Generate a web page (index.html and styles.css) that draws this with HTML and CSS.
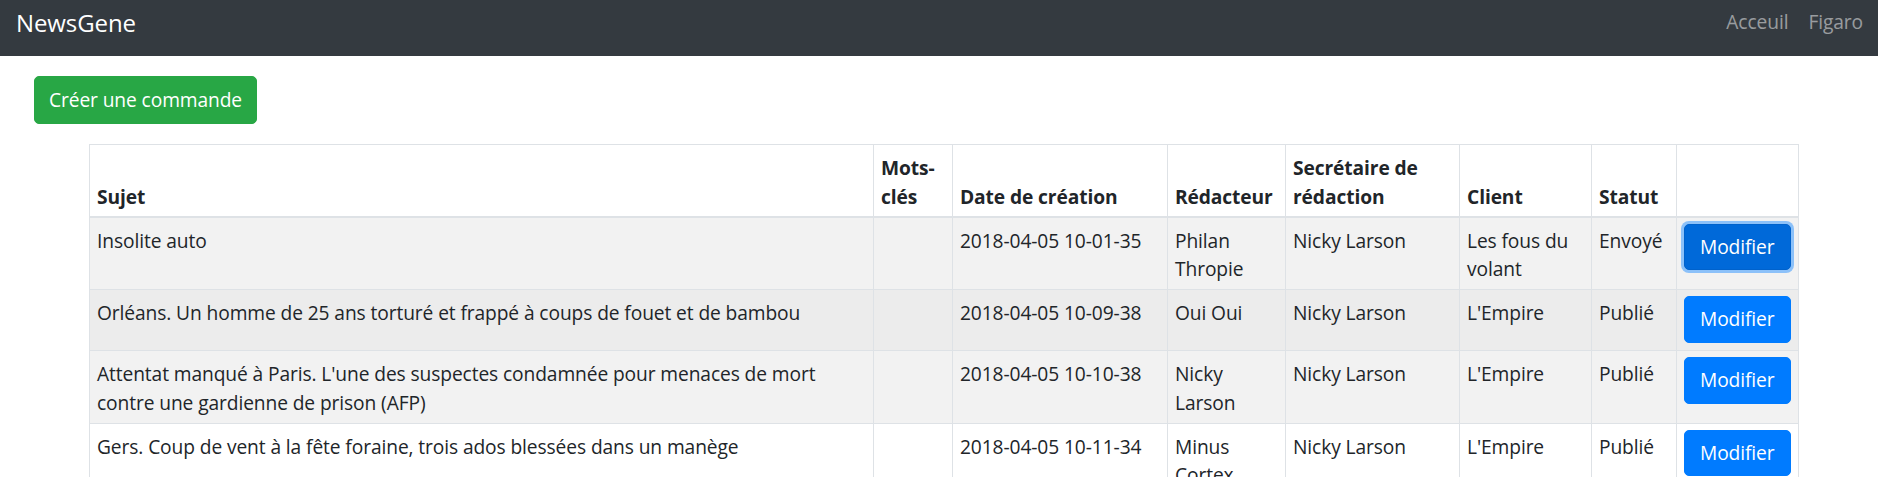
FILE: index.html
```html
<!DOCTYPE html>
<html lang="fr">
<head>
<meta charset="utf-8">
<title>NewsGene</title>
<link rel="stylesheet" href="styles.css">
</head>
<body>
<nav class="navbar">
  <a class="brand" href="#">NewsGene</a>
  <div class="nav-links">
    <a class="nav-link" href="#">Acceuil</a>
    <a class="nav-link" href="#">Figaro</a>
  </div>
</nav>
<main class="content">
  <div class="actions">
    <a class="btn btn-success" href="#">Créer une commande</a>
  </div>
  <table class="orders">
    <colgroup>
      <col class="c-sujet">
      <col class="c-mots">
      <col class="c-date">
      <col class="c-red">
      <col class="c-sec">
      <col class="c-client">
      <col class="c-statut">
      <col class="c-action">
    </colgroup>
    <thead>
      <tr>
        <th>Sujet</th>
        <th>Mots-clés</th>
        <th>Date de création</th>
        <th>Rédacteur</th>
        <th>Secrétaire de rédaction</th>
        <th>Client</th>
        <th>Statut</th>
        <th></th>
      </tr>
    </thead>
    <tbody>
      <tr class="striped">
        <td>Insolite auto</td>
        <td></td>
        <td>2018-04-05 10-01-35</td>
        <td>Philan Thropie</td>
        <td>Nicky Larson</td>
        <td>Les fous du volant</td>
        <td>Envoyé</td>
        <td class="cell-action"><a class="btn btn-primary is-focus" href="#">Modifier</a></td>
      </tr>
      <tr class="hovered">
        <td>Orléans. Un homme de 25 ans torturé et frappé à coups de fouet et de bambou</td>
        <td></td>
        <td>2018-04-05 10-09-38</td>
        <td>Oui Oui</td>
        <td>Nicky Larson</td>
        <td>L'Empire</td>
        <td>Publié</td>
        <td class="cell-action"><a class="btn btn-primary" href="#">Modifier</a></td>
      </tr>
      <tr class="striped">
        <td>Attentat manqué à Paris. L'une des suspectes condamnée pour menaces de mort contre une gardienne de prison (AFP)</td>
        <td></td>
        <td>2018-04-05 10-10-38</td>
        <td>Nicky Larson</td>
        <td>Nicky Larson</td>
        <td>L'Empire</td>
        <td>Publié</td>
        <td class="cell-action"><a class="btn btn-primary" href="#">Modifier</a></td>
      </tr>
      <tr>
        <td>Gers. Coup de vent à la fête foraine, trois ados blessées dans un manège</td>
        <td></td>
        <td>2018-04-05 10-11-34</td>
        <td>Minus Cortex</td>
        <td>Nicky Larson</td>
        <td>L'Empire</td>
        <td>Publié</td>
        <td class="cell-action"><a class="btn btn-primary" href="#">Modifier</a></td>
      </tr>
    </tbody>
  </table>
</main>
</body>
</html>
```
FILE: styles.css
```css
* {
  box-sizing: border-box;
}

html, body {
  margin: 0;
  padding: 0;
  background: #fff;
}

body {
  font-family: "Open Sans", "Noto Sans", sans-serif;
  font-size: 19.2px;
  line-height: 28.8px;
  letter-spacing: -0.1px;
  color: #212529;
  overflow: hidden;
}

a {
  text-decoration: none;
}

.navbar {
  display: flex;
  justify-content: space-between;
  align-items: flex-start;
  height: 56px;
  padding: 0 5px 0 16px;
  background: #343a40;
}

.brand {
  color: #fff;
  font-size: 24px;
  line-height: 36px;
  padding-top: 5px;
}

.nav-links {
  display: flex;
  padding-top: 8px;
}

.nav-link {
  color: rgba(255, 255, 255, 0.5);
  padding: 0 10px;
  line-height: 28.8px;
}

.content {
  padding: 20px 0 0 34px;
}

.actions {
  display: flex;
}

.btn {
  display: inline-block;
  color: #fff;
  border: 1px solid transparent;
  white-space: nowrap;
}

.btn-success {
  background: #28a745;
  border-color: #28a745;
  padding: 8px 14px;
  line-height: 30px;
  border-radius: 5px;
}

.btn-primary {
  background: #007bff;
  border-color: #007bff;
  padding: 8px 15px;
  line-height: 28.8px;
  border-radius: 5px;
  vertical-align: top;
}

.btn-primary.is-focus {
  background: #0069d9;
  border-color: #0062cc;
  box-shadow: 0 0 0 3px rgba(38, 143, 255, 0.5);
}

.orders {
  margin: 20px 0 0 55px;
  width: 1709px;
  table-layout: fixed;
  border-collapse: collapse;
  border: 1px solid #dee2e6;
}

.c-sujet { width: 784px; }
.c-mots { width: 79px; }
.c-date { width: 215px; }
.c-red { width: 118px; }
.c-sec { width: 174px; }
.c-client { width: 132px; }
.c-statut { width: 85px; }
.c-action { width: 122px; }

.orders th,
.orders td {
  border: 1px solid #dee2e6;
  text-align: left;
}

.orders th {
  font-weight: 700;
  vertical-align: bottom;
  padding: 9px 7px 4px;
  border-bottom: 2px solid #dee2e6;
}

.orders td {
  vertical-align: top;
  padding: 9px 7px 5px;
}

.orders td.cell-action {
  padding: 6px 7px 7px;
}

.orders tr.striped {
  background: #f2f2f2;
}

.orders tr.hovered {
  background: #ececec;
}
```
